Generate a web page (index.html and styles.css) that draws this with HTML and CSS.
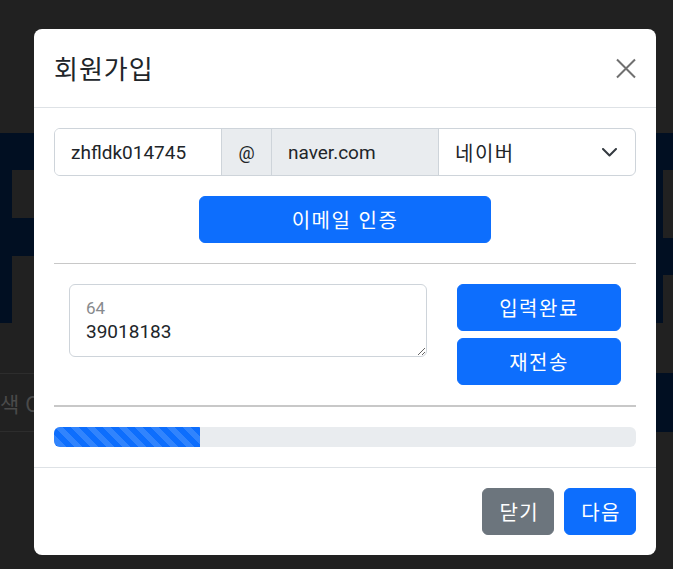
FILE: index.html
```html
<!DOCTYPE html>
<html lang="ko">
<head>
<meta charset="utf-8">
<title>회원가입</title>
<link rel="stylesheet" href="styles.css">
</head>
<body>
<div class="page">
  <div class="hero">
    <span class="glyph g1"></span>
    <span class="glyph g2"></span>
    <span class="glyph g3"></span>
    <span class="glyph g4"></span>
  </div>
  <div class="search">
    <div class="search-field"><span class="search-text">색 O</span></div>
    <div class="search-btn"></div>
  </div>
</div>

<div class="modal">
  <div class="modal-header">
    <h5 class="modal-title">회원가입</h5>
    <button class="btn-close" type="button" aria-label="닫기">
      <svg width="20" height="21" viewBox="0 0 20 21"><path d="M1 1.5 19 19.5M19 1.5 1 19.5" stroke="#707070" stroke-width="2" fill="none"/></svg>
    </button>
  </div>
  <div class="modal-body">
    <div class="input-group">
      <input class="field field-id" type="text" value="zhfldk014745">
      <span class="addon">@</span>
      <input class="field field-domain" type="text" value="naver.com" readonly>
      <div class="select">
        <span>네이버</span>
        <svg width="15" height="9" viewBox="0 0 15 9"><path d="M1 1 7.5 7.5 14 1" stroke="#343a40" stroke-width="2" fill="none" stroke-linecap="round" stroke-linejoin="round"/></svg>
      </div>
    </div>
    <button class="btn btn-primary btn-verify" type="button">이메일 인증</button>
    <hr class="divider">
    <div class="verify-row">
      <div class="col col-8">
        <div class="floating">
          <textarea class="code">39018183</textarea>
          <label class="floating-label">64</label>
        </div>
      </div>
      <div class="col col-4">
        <button class="btn btn-primary" type="button">입력완료</button>
        <button class="btn btn-primary" type="button">재전송</button>
      </div>
    </div>
    <hr class="divider thick">
    <div class="progress"><div class="progress-bar" style="width:25%"></div></div>
  </div>
  <div class="modal-footer">
    <button class="btn btn-secondary btn-footer" type="button">닫기</button>
    <button class="btn btn-primary btn-footer" type="button">다음</button>
  </div>
</div>
</body>
</html>
```

FILE: styles.css
```css
* { box-sizing: border-box; }
html, body { margin: 0; height: 100%; }
body {
  background: #212121;
  overflow: hidden;
  position: relative;
  font-family: Roboto, "Noto Sans CJK KR", sans-serif;
  color: #212529;
}

/* background page (under the backdrop) */
.page { padding-top: 133px; }
.hero { height: 190px; background: #010f22; position: relative; }
.glyph { position: absolute; background: #212121; }
.g1 { left: 12px; top: 37px; width: 40px; height: 48px; }
.g2 { left: 12px; top: 123px; width: 40px; height: 67px; }
.g3 { left: 663px; top: 37px; width: 10px; height: 68px; }
.g4 { left: 663px; top: 142px; width: 10px; height: 48px; }
.search { margin-top: 50px; height: 59px; display: flex; }
.search-field {
  flex: 1;
  border-top: 1px solid #2d2d2d;
  border-bottom: 1px solid #2d2d2d;
  overflow: hidden;
  display: flex;
  align-items: center;
}
.search-text {
  margin-left: 0;
  font-family: "Noto Sans CJK KR", sans-serif;
  font-size: 21px;
  color: #4a4a4a;
  white-space: nowrap;
}
.search-btn { width: 120px; background: #010f22; }

/* modal */
.modal {
  position: absolute;
  left: 34px;
  top: 29px;
  width: 622px;
  background: #fff;
  border-radius: 8px;
}
.modal-header {
  display: flex;
  align-items: center;
  justify-content: space-between;
  padding: 20px;
  border-bottom: 1px solid #dee2e6;
}
.modal-title {
  margin: 0;
  font-family: "Noto Sans CJK KR", sans-serif;
  font-size: 26px;
  letter-spacing: 1px;
  line-height: 38px;
  font-weight: 400;
  color: #212529;
}
.btn-close {
  width: 20px;
  height: 21px;
  padding: 0;
  border: 0;
  background: none;
  display: block;
}
.btn-close svg { display: block; }
.modal-body { padding: 20px; }

.input-group {
  display: flex;
  height: 48px;
  border: 1px solid #ced4da;
  border-radius: 6px;
  overflow: hidden;
}
.field {
  min-width: 0;
  border: 0;
  padding: 0 16px;
  font-family: Roboto, sans-serif;
  font-size: 19px;
  color: #212529;
  background: #fff;
  outline: none;
}
.field-id { flex: 0 0 166px; }
.field-domain { flex: 1 1 0; background: #e9ecef; border-left: 1px solid #ced4da; }
.addon {
  flex: 0 0 50px;
  border-left: 1px solid #ced4da;
  background: #e9ecef;
  display: flex;
  align-items: center;
  justify-content: center;
  font-size: 18px;
}
.select {
  flex: 0 0 197px;
  border-left: 1px solid #ced4da;
  display: flex;
  align-items: center;
  justify-content: space-between;
  padding: 0 18px 0 16px;
  font-family: "Noto Sans CJK KR", sans-serif;
  font-size: 20px;
  letter-spacing: 1.5px;
}
.select svg { display: block; }

.btn {
  font-family: "Noto Sans CJK KR", sans-serif;
  font-size: 20px;
  letter-spacing: 1.5px;
  border: 1px solid transparent;
  border-radius: 6px;
  color: #fff;
  height: 47px;
  padding: 0 16px;
  line-height: 45px;
  cursor: pointer;
}
.btn-primary { background: #0d6efd; border-color: #0d6efd; }
.btn-secondary { background: #6c757d; border-color: #6c757d; }
.btn-verify { display: block; width: 292px; margin: 20px auto 0; }
.btn-footer { padding: 0 14px 0 16px; }

.divider { margin: 20px 0; border: 0; border-top: 1px solid #c8c8c8; height: 0; }
.divider.thick { border-top-width: 2px; }

.verify-row { display: flex; }
.col-8 { flex: 0 0 66.6667%; padding: 0 15px; }
.col-4 { flex: 0 0 33.3333%; padding: 0 15px; display: flex; flex-direction: column; gap: 7px; }
.floating { position: relative; }
.code {
  display: block;
  width: 100%;
  height: 73px;
  border: 1px solid #ced4da;
  border-radius: 6px;
  padding: 35px 16px 0;
  font-family: Roboto, sans-serif;
  font-size: 19px;
  line-height: 24px;
  color: #212529;
  resize: vertical;
  outline: none;
}
.floating-label {
  position: absolute;
  left: 17px;
  top: 12px;
  font-family: Roboto, sans-serif;
  font-size: 17px;
  line-height: 24px;
  color: #878a8d;
}

.progress {
  height: 20px;
  background: #e9ecef;
  border-radius: 6px;
  overflow: hidden;
  display: flex;
}
.progress-bar {
  background-color: #0d6efd;
  background-image: linear-gradient(45deg, rgba(255,255,255,.15) 25%, transparent 25%, transparent 50%, rgba(255,255,255,.15) 50%, rgba(255,255,255,.15) 75%, transparent 75%, transparent);
  background-size: 16px 16px;
}

.modal-footer {
  display: flex;
  justify-content: flex-end;
  gap: 10px;
  padding: 20px;
  border-top: 1px solid #dee2e6;
}
```
